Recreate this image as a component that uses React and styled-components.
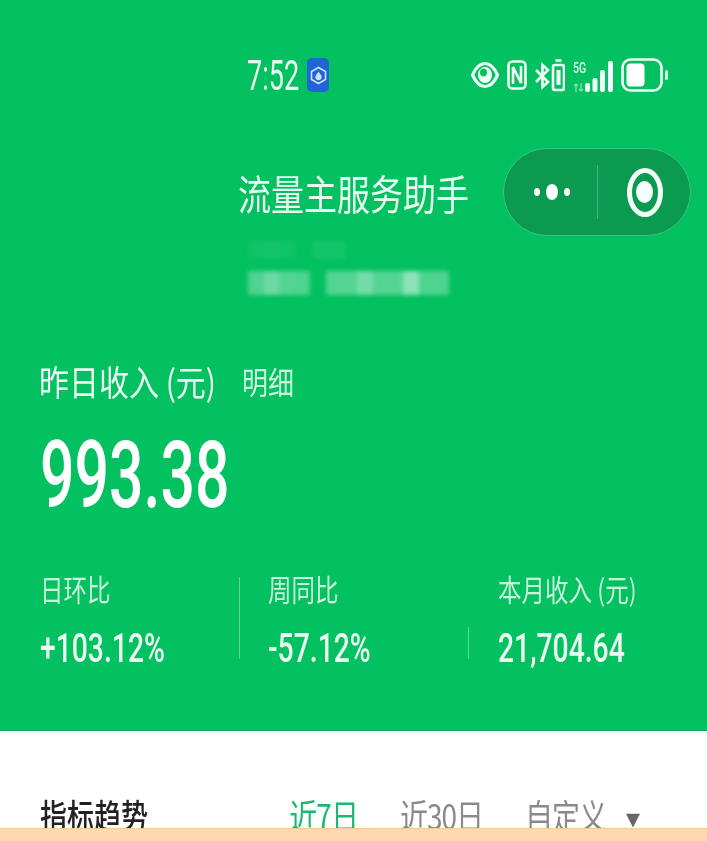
import React from "react";
import styled, { createGlobalStyle, css } from "styled-components";

const cjk = `"Noto Sans CJK SC", "Noto Sans", sans-serif`;
const digits = `"Roboto", "Noto Sans CJK SC", sans-serif`;

const GlobalStyle = createGlobalStyle`
  html, body {
    margin: 0;
    padding: 0;
    background: #fff;
  }
`;

// the screenshot is stretched tall, so the text is too
const tall = (y) => css`
  transform: scaleY(${y});
  transform-origin: center;
`;

const narrow = (x) => css`
  transform: scaleX(${x});
  transform-origin: left center;
`;

const Page = styled.div`
  width: 707px;
  height: 841px;
  display: flex;
  flex-direction: column;
  overflow: hidden;
  font-family: ${cjk};
`;

const Hero = styled.section`
  height: 731px;
  flex: none;
  background: #03c060;
  border-bottom: 1px solid #12a85c;
  box-sizing: border-box;
  color: #eafaf1;
`;

const StatusBar = styled.div`
  height: 40px;
  margin-top: 55px;
  padding: 0 39px 0 247px;
  display: flex;
  align-items: center;
  justify-content: space-between;
`;

const TimeGroup = styled.div`
  display: flex;
  align-items: center;
  gap: 7px;
`;

const Time = styled.span`
  font-family: ${digits};
  font-size: 43px;
  line-height: 40px;
  width: 53px;
  display: inline-block;
  white-space: nowrap;
  ${narrow(0.63)}
`;

const AppBadge = styled.div`
  width: 22px;
  height: 34px;
  border-radius: 5px;
  background: #2164d8;
  display: flex;
  align-items: center;
  justify-content: center;
`;

const StatusIcons = styled.div`
  display: flex;
  align-items: center;
  gap: 8px;
`;

const NetworkBlock = styled.div`
  display: flex;
  align-items: flex-end;
  height: 34px;
`;

const NetworkLabel = styled.div`
  width: 12px;
  height: 30px;
  display: flex;
  flex-direction: column;
  justify-content: space-between;
  font-family: ${digits};
  font-size: 14px;
  line-height: 13px;
  font-weight: 500;
  white-space: nowrap;
`;

const FiveG = styled.span`
  display: inline-block;
  ${narrow(0.75)}
`;

const TitleRow = styled.header`
  margin-top: 53px;
  padding: 0 16px;
  display: grid;
  grid-template-columns: 1fr auto 1fr;
  align-items: center;
`;

const Title = styled.h1`
  grid-column: 2;
  margin: 0;
  font-size: 33px;
  line-height: 44px;
  font-weight: 400;
  white-space: nowrap;
  ${tall(1.25)}
`;

const Capsule = styled.div`
  grid-column: 3;
  justify-self: end;
  width: 188px;
  height: 88px;
  box-sizing: border-box;
  border-radius: 44px;
  background: #0b9a50;
  border: 1px solid #3ac57f;
  display: flex;
  align-items: center;
`;

const CapsuleSide = styled.div`
  flex: 1;
  height: 54px;
  display: flex;
  align-items: center;
  justify-content: center;
  border-left: ${(p) => (p.$divided ? "1px solid #3fb67a" : "none")};
`;

const MoreDots = styled.div`
  display: flex;
  align-items: center;
  gap: 6px;
  margin-left: 3px;
`;

const Dot = styled.span`
  width: ${(p) => p.$w}px;
  height: ${(p) => p.$h}px;
  border-radius: 50%;
  background: #fff;
`;

const Target = styled.div`
  width: 36px;
  height: 49px;
  box-sizing: border-box;
  border: 5px solid #f2fff8;
  border-radius: 50%;
  display: flex;
  align-items: center;
  justify-content: center;
  margin-left: 2px;
`;

const TargetCore = styled.span`
  width: 17px;
  height: 22px;
  border-radius: 50%;
  background: #f2fff8;
`;

const MaskedName = styled.div`
  height: 54px;
  padding: 0 0 0 248px;
  margin-top: 5px;
  display: flex;
  flex-direction: column;
  justify-content: space-between;
  filter: blur(2px);
`;

const MaskRow = styled.div`
  display: flex;
  gap: 16px;
  height: ${(p) => p.$h}px;
`;

const MaskChunk = styled.div`
  display: flex;
`;

const MaskCell = styled.span`
  width: ${(p) => p.$w}px;
  background: rgba(255, 255, 255, ${(p) => p.$a});
`;

const IncomeBlock = styled.div`
  margin-top: 63px;
  padding-left: 40px;
`;

const IncomeHead = styled.div`
  display: flex;
  align-items: center;
  gap: 26px;
  height: 46px;
`;

const IncomeLabel = styled.span`
  font-size: 30px;
  line-height: 46px;
  white-space: nowrap;
  margin-left: -1px;
  ${tall(1.18)}
`;

const DetailLink = styled.span`
  font-size: 26px;
  line-height: 46px;
  color: #cdf3de;
  ${tall(1.2)}
`;

const Amount = styled.div`
  font-family: ${digits};
  font-size: 92px;
  line-height: 92px;
  margin-top: 26px;
  font-weight: 500;
  color: #fff;
  ${narrow(0.66)}
`;

const Stats = styled.div`
  margin-top: 46px;
  padding-left: 40px;
  display: grid;
  grid-template-columns: 199px 1px 228px 1px 1fr;
`;

const Stat = styled.div`
  padding-left: ${(p) => p.$inset || 0}px;
`;

const StatLabel = styled.div`
  font-size: 23.5px;
  line-height: 40px;
  color: #c9f1db;
  white-space: nowrap;
  ${tall(1.25)}
`;

const StatValue = styled.div`
  font-family: ${digits};
  font-size: 41px;
  line-height: 44px;
  margin-top: 18px;
  font-weight: 500;
  white-space: nowrap;
  ${narrow(0.69)}
`;

const Divider = styled.div`
  align-self: ${(p) => (p.$short ? "end" : "stretch")};
  height: ${(p) => (p.$short ? "32px" : "auto")};
  margin: ${(p) => (p.$short ? "0 0 11px" : "9px 0 11px")};
  background: #5fd496;
`;

const Trend = styled.section`
  flex: 1;
  min-height: 0;
  overflow: hidden;
  padding: 63px 67px 0 40px;
  background: #fff;
  display: flex;
  align-items: flex-start;
  justify-content: space-between;
`;

const TrendTitle = styled.h2`
  margin: 0;
  font-size: 27px;
  line-height: 42px;
  font-weight: 500;
  color: #222;
  white-space: nowrap;
  ${tall(1.25)}
`;

const RangeTabs = styled.div`
  display: flex;
  align-items: center;
  gap: 42px;
`;

const RangeTab = styled.span`
  font-size: 28px;
  line-height: 42px;
  letter-spacing: -1px;
  white-space: nowrap;
  color: ${(p) => (p.$active ? "#1fb573" : "#8a8a8a")};
  ${tall(1.25)}
`;

const Caret = styled.span`
  display: inline-block;
  margin-left: 20px;
  vertical-align: 2px;
  border-left: 7px solid transparent;
  border-right: 7px solid transparent;
  border-top: 11px solid #666;
`;

const Footer = styled.div`
  height: 13px;
  flex: none;
  background: #fdd8b1;
  border-top: 1px solid #f6c996;
  box-sizing: border-box;
`;

const EyeIcon = () => (
  <svg width="28" height="28" viewBox="0 0 28 28">
    <path d="M1.5 14C5 6 9 2.5 14 2.5S23 6 26.5 14C23 22 19 25.5 14 25.5S5 22 1.5 14Z" fill="none" stroke="#f0fff7" strokeWidth="3.2" />
    <ellipse cx="14" cy="14" rx="7" ry="8" fill="#f0fff7" />
    <ellipse cx="12.5" cy="11.5" rx="3.5" ry="4" fill="#03c060" />
  </svg>
);

const NfcIcon = () => (
  <svg width="20" height="30" viewBox="0 0 20 30" fill="none" stroke="#f0fff7">
    <rect x="1.5" y="1.5" width="17" height="27" rx="4" strokeWidth="2.6" />
    <path d="M6 24V7L14 23V6" strokeWidth="2.6" />
  </svg>
);

const VibrateIcon = () => (
  <svg width="30" height="34" viewBox="0 0 30 34" fill="none" stroke="#f0fff7" strokeWidth="2.6">
    <path d="M1 12L13 24L7.5 29V7L13 12L1 24" />
    <rect x="18" y="7" width="11" height="25" rx="2" />
    <path d="M20.5 2.5H26.5" />
    <rect x="21.5" y="12" width="4" height="15" fill="#f0fff7" stroke="none" />
  </svg>
);

const SyncArrows = () => (
  <svg width="11" height="9" viewBox="0 0 11 9" fill="none" stroke="#7fe0ac" strokeWidth="1.4">
    <path d="M3 9V1M1 3L3 1L5 3M8 0V8M6 6L8 8L10 6" />
  </svg>
);

const SignalIcon = () => (
  <svg width="28" height="32" viewBox="0 0 28 32" fill="#f0fff7">
    <rect x="0" y="23" width="5" height="9" rx="2" />
    <rect x="7.5" y="18" width="5" height="14" rx="2" />
    <rect x="15" y="10" width="5" height="22" rx="2" />
    <rect x="23" y="1" width="5" height="31" rx="2" />
  </svg>
);

const BatteryIcon = () => (
  <svg width="47" height="34" viewBox="0 0 47 34" fill="none">
    <rect x="1.5" y="1.5" width="39" height="31" rx="8" stroke="#f0fff7" strokeWidth="2.6" />
    <rect x="5.5" y="5.5" width="18" height="23" rx="4" fill="#fff" />
    <rect x="44" y="12" width="3" height="10" rx="1.5" fill="#cdf3de" />
  </svg>
);

const BadgeIcon = () => (
  <svg width="17" height="19" viewBox="0 0 17 19">
    <path d="M8.5 1.5L15.5 5.5V13.5L8.5 17.5L1.5 13.5V5.5Z" fill="none" stroke="#cfe0fb" strokeWidth="1.6" />
    <path d="M8.5 5.5L11.5 10A3.2 3.2 0 1 1 5.5 10Z" fill="#cfe0fb" />
  </svg>
);

const maskTop = [
  { id: "a", cells: [[16, 0.05], [16, 0.07], [16, 0.05]] },
  { id: "b", cells: [[34, 0.07]] },
];

const maskBottom = [
  { id: "a", cells: [[16, 0.3], [15, 0.42], [16, 0.32], [15, 0.3]] },
  { id: "b", cells: [[31, 0.32], [16, 0.45], [30, 0.32], [16, 0.55], [30, 0.3]] },
];

const MaskLine = ({ chunks, h }) => (
  <MaskRow $h={h}>
    {chunks.map((chunk) => (
      <MaskChunk key={chunk.id}>
        {chunk.cells.map(([w, a], i) => (
          <MaskCell key={i} $w={w} $a={a} />
        ))}
      </MaskChunk>
    ))}
  </MaskRow>
);

const App = () => {
  return (
    <Page>
      <GlobalStyle />
      <Hero>
        <StatusBar>
          <TimeGroup>
            <Time>7:52</Time>
            <AppBadge>
              <BadgeIcon />
            </AppBadge>
          </TimeGroup>
          <StatusIcons>
            <EyeIcon />
            <NfcIcon />
            <VibrateIcon />
            <NetworkBlock>
              <NetworkLabel>
                <FiveG>5G</FiveG>
                <SyncArrows />
              </NetworkLabel>
              <SignalIcon />
            </NetworkBlock>
            <BatteryIcon />
          </StatusIcons>
        </StatusBar>

        <TitleRow>
          <Title>流量主服务助手</Title>
          <Capsule>
            <CapsuleSide>
              <MoreDots>
                <Dot $w={6} $h={8} />
                <Dot $w={12} $h={16} />
                <Dot $w={6} $h={8} />
              </MoreDots>
            </CapsuleSide>
            <CapsuleSide $divided>
              <Target>
                <TargetCore />
              </Target>
            </CapsuleSide>
          </Capsule>
        </TitleRow>

        <MaskedName>
          <MaskLine chunks={maskTop} h={18} />
          <MaskLine chunks={maskBottom} h={24} />
        </MaskedName>

        <IncomeBlock>
          <IncomeHead>
            <IncomeLabel>昨日收入 (元)</IncomeLabel>
            <DetailLink>明细</DetailLink>
          </IncomeHead>
          <Amount>993.38</Amount>
        </IncomeBlock>

        <Stats>
          <Stat>
            <StatLabel>日环比</StatLabel>
            <StatValue>+103.12%</StatValue>
          </Stat>
          <Divider />
          <Stat $inset={28}>
            <StatLabel>周同比</StatLabel>
            <StatValue>-57.12%</StatValue>
          </Stat>
          <Divider $short />
          <Stat $inset={29}>
            <StatLabel>本月收入 (元)</StatLabel>
            <StatValue>21,704.64</StatValue>
          </Stat>
        </Stats>
      </Hero>

      <Trend>
        <TrendTitle>指标趋势</TrendTitle>
        <RangeTabs>
          <RangeTab $active>近7日</RangeTab>
          <RangeTab>近30日</RangeTab>
          <RangeTab>
            自定义
            <Caret />
          </RangeTab>
        </RangeTabs>
      </Trend>
      <Footer />
    </Page>
  );
};

export default App;
